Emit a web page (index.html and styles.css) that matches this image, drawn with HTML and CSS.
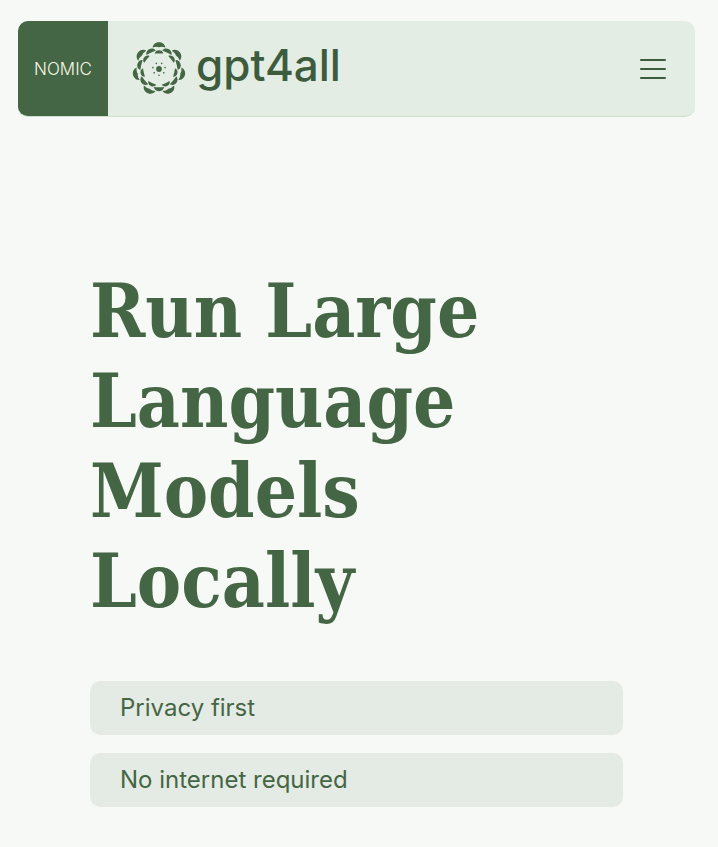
FILE: index.html
```html
<!DOCTYPE html>
<html lang="en">
<head>
  <meta charset="UTF-8">
  <meta name="viewport" content="width=device-width, initial-scale=1.0">
  <title>GPT4All</title>
  <link rel="stylesheet" href="styles.css">
</head>
<body>
  <header class="navbar">
    <a class="nomic" href="#">NOMIC</a>
    <a class="brand" href="#">
      <svg class="flower" viewBox="-27 -27 54 54" aria-hidden="true">
        <defs>
          <path id="outer" d="M-6.4-21.4C-5.4-28.4 5.4-28.4 6.4-21.4Q3-22.8 0-21.8Q-3-22.8-6.4-21.4Z"/>
          <path id="middle" d="M-5.2-18C-4.2-23.6 4.2-23.6 5.2-18Q0-18.4-5.2-18Z"/>
          <path id="inner" d="M-4.4-15.4C-3.6-20 3.6-20 4.4-15.4Q0-15.8-4.4-15.4Z"/>
          <g id="petals">
            <use href="#outer"/>
            <use href="#middle" transform="rotate(25.714)"/>
            <use href="#inner"/>
            <circle cx="0" cy="6.2" r="0.8"/>
          </g>
        </defs>
        <use href="#petals"/>
        <use href="#petals" transform="rotate(51.429)"/>
        <use href="#petals" transform="rotate(102.857)"/>
        <use href="#petals" transform="rotate(154.286)"/>
        <use href="#petals" transform="rotate(205.714)"/>
        <use href="#petals" transform="rotate(257.143)"/>
        <use href="#petals" transform="rotate(308.571)"/>
        <circle r="2.9"/>
      </svg>
      <span class="brand-name">gpt4all</span>
    </a>
    <button class="menu-btn" type="button" aria-label="Open menu">
      <svg viewBox="0 0 28 22" aria-hidden="true">
        <path d="M2 2h24M2 11h24M2 20h24"/>
      </svg>
    </button>
  </header>

  <main class="hero">
    <h1>Run Large Language Models Locally</h1>
    <ul class="features">
      <li>Privacy first</li>
      <li>No internet required</li>
    </ul>
  </main>
</body>
</html>
```

FILE: styles.css
```css
* { box-sizing: border-box; }
body {
  margin: 0;
  background: #f7f9f7;
  color: #446644;
  font-family: Inter, sans-serif;
}
.navbar {
  display: flex;
  align-items: stretch;
  height: 96px;
  margin: 21px 23px 0 18px;
  background: #e3ede3;
  border-bottom: 1px solid #cfdfcf;
  border-radius: 10px;
  overflow: hidden;
}
.nomic {
  display: flex;
  align-items: center;
  justify-content: center;
  width: 90px;
  background: #446644;
  color: #f7f7e6;
  font-size: 17px;
  font-weight: 300;
  text-decoration: none;
}
.brand {
  display: flex;
  align-items: center;
  gap: 10px;
  padding-left: 24px;
  color: #3d5c3d;
  text-decoration: none;
}
.flower {
  width: 54px;
  height: 54px;
  fill: #446644;
}
.brand-name {
  font-size: 44px;
  font-weight: 500;
  line-height: 56px;
  padding-bottom: 8px;
}
.menu-btn {
  display: flex;
  align-items: center;
  margin-left: auto;
  padding: 0 28px;
  border: none;
  background: none;
  cursor: pointer;
}
.menu-btn svg {
  width: 28px;
  height: 22px;
  fill: none;
  stroke: #3d5c3d;
  stroke-width: 2;
  stroke-linecap: round;
}
.hero {
  padding: 149px 95px 40px 90px;
}
h1 {
  margin: 0;
  max-width: 420px;
  font-family: "DejaVu Serif Condensed", "Liberation Serif", serif;
  font-size: 74px;
  font-weight: 700;
  line-height: 90px;
}
.features {
  display: flex;
  flex-direction: column;
  gap: 18px;
  margin: 55px 0 0;
  padding: 0;
  list-style: none;
}
.features li {
  padding: 12px 30px;
  background: #e4ebe4;
  border-radius: 10px;
  font-size: 24px;
  line-height: 30px;
}
```
